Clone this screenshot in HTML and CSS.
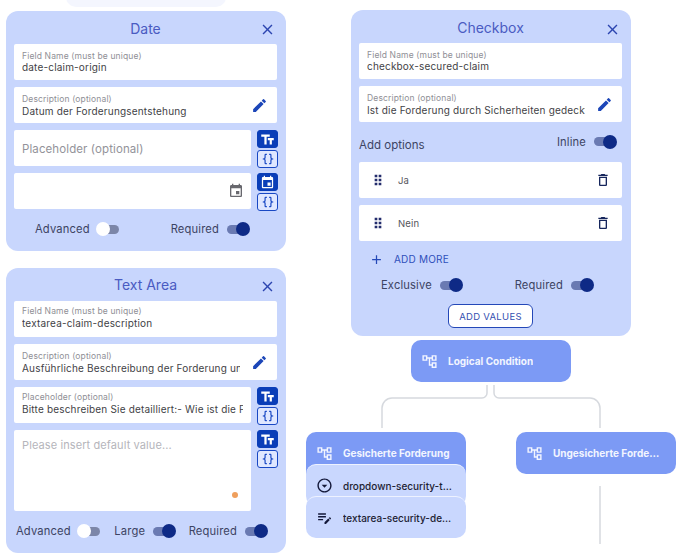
FILE: index.html
```html
<!DOCTYPE html>
<html lang="en">
<head>
<meta charset="utf-8">
<title>Form flow editor</title>
<link rel="stylesheet" href="styles.css">
</head>
<body>
<svg class="defs" width="0" height="0" aria-hidden="true">
  <symbol id="i-close" viewBox="0 0 24 24"><path d="M19 6.41 17.59 5 12 10.59 6.41 5 5 6.41 10.59 12 5 17.59 6.41 19 12 13.41 17.59 19 19 17.59 13.41 12z"/></symbol>
  <symbol id="i-edit" viewBox="0 0 24 24"><path d="M3 17.25V21h3.75L17.81 9.94l-3.75-3.75L3 17.25zM20.71 7.04a1 1 0 0 0 0-1.41l-2.34-2.34a1 1 0 0 0-1.41 0l-1.83 1.83 3.75 3.75 1.83-1.83z"/></symbol>
  <symbol id="i-size" viewBox="0 0 24 24"><path d="M2 4v3.5h5V20h3.6V7.5h5V4H2zM22 9.5h-9.5V13h3v7H19v-7h3V9.5z"/></symbol>
  <symbol id="i-braces" viewBox="0 0 24 24"><path d="M8 3a2 2 0 0 0-2 2v4a2 2 0 0 1-2 2H3v2h1a2 2 0 0 1 2 2v4a2 2 0 0 0 2 2h2v-2H8v-5a2 2 0 0 0-2-2 2 2 0 0 0 2-2V5h2V3M16 3a2 2 0 0 1 2 2v4a2 2 0 0 0 2 2h1v2h-1a2 2 0 0 0-2 2v4a2 2 0 0 1-2 2h-2v-2h2v-5a2 2 0 0 1 2-2 2 2 0 0 1-2-2V5h-2V3h2z"/></symbol>
  <symbol id="i-event" viewBox="0 0 24 24"><path d="M17 12h-5v5h5v-5zM16 1v2H8V1H6v2H5C3.89 3 3.01 3.9 3.01 5L3 19c0 1.1.89 2 2 2h14c1.1 0 2-.9 2-2V5c0-1.1-.9-2-2-2h-1V1h-2zm3 18H5V8h14v11z"/></symbol>
  <symbol id="i-delete" viewBox="0 0 24 24"><path d="M6 19c0 1.1.9 2 2 2h8c1.1 0 2-.9 2-2V7H6v12zM8 9h8v10H8V9zm7.5-5-1-1h-5l-1 1H5v2h14V4z"/></symbol>
  <symbol id="i-drag" viewBox="0 0 24 24"><path d="M7 4h4v4H7zM13 4h4v4h-4zM7 10h4v4H7zM13 10h4v4h-4zM7 16h4v4H7zM13 16h4v4h-4z"/></symbol>
  <symbol id="i-add" viewBox="0 0 24 24"><path d="M19 13h-6v6h-2v-6H5v-2h6V5h2v6h6v2z"/></symbol>
  <symbol id="i-tree" viewBox="0 0 24 24"><path fill-rule="evenodd" d="M22 11V3h-7v3H9V3H2v8h7V8h2v10h4v3h7v-8h-7v3h-2V8h2v3h7zM7 9H4V5h3v4zm10 6h3v4h-3v-4zm0-10h3v4h-3V5z"/></symbol>
  <symbol id="i-dropdown" viewBox="0 0 24 24"><path d="M12 4c4.41 0 8 3.59 8 8s-3.59 8-8 8-8-3.59-8-8 3.59-8 8-8m0-2C6.48 2 2 6.48 2 12s4.48 10 10 10 10-4.48 10-10S17.52 2 12 2zm0 13-4-4h8z"/></symbol>
  <symbol id="i-note" viewBox="0 0 24 24"><path d="M3 10h11v2H3v-2zm0-2h11V6H3v2zm0 8h7v-2H3v2zm15.01-3.13.71-.71a1 1 0 0 1 1.41 0l.71.71a1 1 0 0 1 0 1.41l-.71.71-2.12-2.12zm-.71.71-5.3 5.3V21h2.12l5.3-5.3-2.12-2.12z"/></symbol>
</svg>

<main class="canvas">
  <div class="ghost-node"></div>

  <svg class="wires" width="699" height="557" viewBox="0 0 699 557" aria-hidden="true">
    <path d="M487 385v8a5 5 0 0 1-5 5H392a10 10 0 0 0-10 10v20"/>
    <path d="M494 385v8a5 5 0 0 0 5 5h91a10 10 0 0 1 10 10v20"/>
    <path d="M600 486v58"/>
  </svg>

  <section class="card card-date">
    <header class="card-head"><h2>Date</h2><svg class="ic close"><use href="#i-close"/></svg></header>
    <div class="stack">
      <div class="field first"><span class="lbl">Field Name (must be unique)</span><span class="val">date-claim-origin</span></div>
      <div class="field has-icon"><div class="field-text"><span class="lbl">Description (optional)</span><span class="val">Datum der Forderungsentstehung</span></div><svg class="ic edit"><use href="#i-edit"/></svg></div>
      <div class="with-side">
        <div class="field grow"><span class="ph">Placeholder (optional)</span></div>
        <div class="side"><span class="sq on"><svg class="ic"><use href="#i-size"/></svg></span><span class="sq"><svg class="ic"><use href="#i-braces"/></svg></span></div>
      </div>
      <div class="with-side">
        <div class="field grow has-icon"><div class="field-text"></div><svg class="ic cal"><use href="#i-event"/></svg></div>
        <div class="side"><span class="sq on"><svg class="ic"><use href="#i-event"/></svg></span><span class="sq"><svg class="ic"><use href="#i-braces"/></svg></span></div>
      </div>
    </div>
    <div class="toggles date-toggles">
      <div class="tg"><span>Advanced</span><span class="switch off"></span></div>
      <div class="tg"><span>Required</span><span class="switch"></span></div>
    </div>
  </section>

  <section class="card card-area">
    <header class="card-head"><h2>Text Area</h2><svg class="ic close"><use href="#i-close"/></svg></header>
    <div class="stack">
      <div class="field"><span class="lbl">Field Name (must be unique)</span><span class="val">textarea-claim-description</span></div>
      <div class="field has-icon"><div class="field-text"><span class="lbl">Description (optional)</span><span class="val">Ausführliche Beschreibung der Forderung und ihrer Entstehung</span></div><svg class="ic edit"><use href="#i-edit"/></svg></div>
      <div class="with-side">
        <div class="field grow"><span class="lbl">Placeholder (optional)</span><span class="val">Bitte beschreiben Sie detailliert:- Wie ist die Forderung entstanden</span></div>
        <div class="side"><span class="sq on"><svg class="ic"><use href="#i-size"/></svg></span><span class="sq"><svg class="ic"><use href="#i-braces"/></svg></span></div>
      </div>
      <div class="with-side tall">
        <div class="field grow area"><span class="ph ph-small">Please insert default value...</span><i class="dot"></i></div>
        <div class="side"><span class="sq on"><svg class="ic"><use href="#i-size"/></svg></span><span class="sq"><svg class="ic"><use href="#i-braces"/></svg></span></div>
      </div>
    </div>
    <div class="toggles area-toggles">
      <div class="tg"><span>Advanced</span><span class="switch off"></span></div>
      <div class="tg"><span>Large</span><span class="switch"></span></div>
      <div class="tg"><span>Required</span><span class="switch"></span></div>
    </div>
  </section>

  <section class="card card-check">
    <header class="card-head"><h2>Checkbox</h2><svg class="ic close"><use href="#i-close"/></svg></header>
    <div class="stack">
      <div class="field first"><span class="lbl">Field Name (must be unique)</span><span class="val">checkbox-secured-claim</span></div>
      <div class="field has-icon"><div class="field-text"><span class="lbl">Description (optional)</span><span class="val">Ist die Forderung durch Sicherheiten gedeckt oder nicht</span></div><svg class="ic edit"><use href="#i-edit"/></svg></div>
    </div>
    <div class="opts-head">
      <span class="opts-title">Add options</span>
      <div class="tg inline-tg"><span>Inline</span><span class="switch"></span></div>
    </div>
    <div class="stack">
      <div class="field option"><svg class="ic drag"><use href="#i-drag"/></svg><span class="opt-name">Ja</span><svg class="ic del"><use href="#i-delete"/></svg></div>
      <div class="field option"><svg class="ic drag"><use href="#i-drag"/></svg><span class="opt-name">Nein</span><svg class="ic del"><use href="#i-delete"/></svg></div>
    </div>
    <div class="add-more"><svg class="ic"><use href="#i-add"/></svg><span>ADD MORE</span></div>
    <div class="toggles check-toggles">
      <div class="tg"><span>Exclusive</span><span class="switch"></span></div>
      <div class="tg"><span>Required</span><span class="switch"></span></div>
    </div>
    <div class="btn-row"><span class="btn">ADD VALUES</span></div>
  </section>

  <div class="node node-logic"><svg class="ic"><use href="#i-tree"/></svg><span>Logical Condition</span></div>

  <div class="branch">
    <div class="node node-head"><svg class="ic"><use href="#i-tree"/></svg><span>Gesicherte Forderung</span></div>
    <div class="node node-child child-a"><svg class="ic"><use href="#i-dropdown"/></svg><span>dropdown-security-type</span></div>
    <div class="node node-child child-b"><svg class="ic"><use href="#i-note"/></svg><span>textarea-security-description</span></div>
  </div>

  <div class="node node-right"><svg class="ic"><use href="#i-tree"/></svg><span>Ungesicherte Forderung</span></div>
</main>
</body>
</html>
```
FILE: styles.css
```css
* { box-sizing: border-box; }
html, body { margin: 0; padding: 0; background: #fff; }
body { font-family: Inter, "Liberation Sans", sans-serif; color: #3a4160; overflow: hidden; }
.defs { position: absolute; }
.canvas { position: relative; width: 699px; height: 557px; overflow: hidden; }

.ghost-node { position: absolute; left: 66px; top: -30px; width: 160px; height: 37px; background: #f4f6fe; border-radius: 10px; }
.wires { position: absolute; left: 0; top: 0; }
.wires path { fill: none; stroke: #d6d9de; stroke-width: 1.5; }

.ic { display: block; width: 16px; height: 16px; fill: currentColor; flex: none; }

.card { position: absolute; width: 280px; background: #c8d6fd; border-radius: 12px; padding: 0 9px 0 8px; }
.card-date { left: 6px; top: 11px; height: 240px; }
.card-area { left: 6px; top: 268px; height: 285px; }
.card-check { left: 351px; top: 10px; height: 326px; }

.card-head { position: relative; height: 33px; display: flex; align-items: center; justify-content: center; }
.card-date .card-head { padding-top: 1px; }
.card-check .card-head { padding-top: 2px; }
.card-head h2 { margin: 0; font-size: 14px; font-weight: 400; color: #4a5bc2; }
.close { position: absolute; right: 1px; top: 10px; width: 17px; height: 17px; color: #2c45b0; }
.card-check .close { top: 11px; }

.stack { display: flex; flex-direction: column; gap: 7px; }
.with-side { display: flex; gap: 6px; height: 36px; }
.with-side.tall { height: 81px; }
.field { height: 36px; background: #fff; border-radius: 2px; padding: 5px 8px 0; display: flex; flex-direction: column; min-width: 0; overflow: hidden; }
.field.first { padding-top: 7px; }
.field.first .val { line-height: 11px; }
.field.grow { flex: 1; height: 100%; }
.has-icon { flex-direction: row; align-items: center; padding: 0 9px 0 8px; gap: 11px; }
.field-text { flex: 1; min-width: 0; overflow: hidden; padding-top: 1px; }
.lbl, .val { display: block; white-space: nowrap; overflow: hidden; }
.lbl { font-size: 8.5px; line-height: 11px; color: #8f8f96; letter-spacing: .15px; }
.val { font-size: 10px; line-height: 13px; color: #3f3f46; letter-spacing: .18px; }
.ph { font-size: 11.5px; line-height: 36px; color: #93939a; letter-spacing: .1px; margin-top: -4px; }
.ph-small { font-size: 11px; line-height: 16px; margin-top: 2px; color: #b5b5bb; }
.edit { width: 17px; height: 17px; color: #1c46b8; }
.cal { width: 16px; height: 16px; color: #68686e; margin-right: -2px; }
.area { position: relative; }
.dot { position: absolute; right: 13px; bottom: 13px; width: 6px; height: 6px; border-radius: 50%; background: #ef9f5d; }

.side { width: 21px; display: flex; flex-direction: column; gap: 2px; margin-right: -1px; flex: none; }
.sq { width: 21px; height: 18px; border-radius: 3px; border: 1px solid #1848c4; color: #1848c4; background: #dfe7ff; display: flex; align-items: center; justify-content: center; flex: none; }
.sq .ic { width: 14px; height: 14px; }
.sq.on { background: #0a3eb8; border-color: #0a3eb8; color: #fff; }
.sq.on .ic { width: 15px; height: 15px; }

.toggles { display: flex; align-items: center; }
.tg { display: flex; align-items: center; font-size: 11.2px; letter-spacing: .15px; color: #3d4463; }
.switch { position: relative; display: block; width: 21px; height: 9px; border-radius: 5px; background: #6a7ab2; margin-left: 8px; }
.switch::after { content: ""; position: absolute; right: -2px; top: -2.5px; width: 14px; height: 14px; border-radius: 50%; background: #0e2a86; }
.switch.off { background: #7c86a8; }
.switch.off::after { right: auto; left: -2px; background: #fff; }

.date-toggles { margin-top: 13px; padding: 0 29px 0 21px; justify-content: space-between; }
.area-toggles { margin-top: 13px; padding: 0 11px 0 2px; justify-content: space-between; }
.check-toggles { margin-top: 1px; padding: 0 30px 0 22px; justify-content: space-between; }

.opts-head { height: 40px; display: flex; align-items: center; justify-content: space-between; padding-right: 7px; }
.opts-title { font-size: 11.5px; color: #3d4463; padding-top: 6px; }
.inline-tg { margin-top: -1px; }
.option { flex-direction: row; align-items: center; padding: 0 11px 0 11px; }
.drag { width: 16px; height: 16px; color: #232c6c; }
.opt-name { flex: 1; font-size: 9.5px; margin-left: 12px; color: #55555c; letter-spacing: .2px; }
.del { width: 16px; height: 16px; color: #16265c; }
.add-more { height: 36px; display: flex; align-items: center; gap: 10px; padding-left: 10px; font-size: 10px; color: #2f50bb; letter-spacing: .2px; }
.add-more .ic { width: 15px; height: 15px; color: #2448b8; }
.btn-row { display: flex; justify-content: center; margin-top: 12px; }
.btn { width: 85px; height: 24px; background: #fff; border: 1px solid #2448b8; border-radius: 6px; color: #3450b0; font-size: 9.5px; display: flex; align-items: center; justify-content: center; letter-spacing: .3px; }

.node { width: 160px; height: 42px; border-radius: 10px; display: flex; align-items: center; font-size: 10px; font-weight: 700; color: #f2f5ff; background: #7c9af5; padding-left: 10px; gap: 10px; }
.node span { white-space: nowrap; overflow: hidden; text-overflow: ellipsis; }
.node .ic { width: 17px; height: 17px; }
.node-logic { position: absolute; left: 411px; top: 340px; }
.node-right { position: absolute; left: 516px; top: 432px; padding-right: 15px; }

.branch { position: absolute; left: 306px; top: 432px; width: 160px; display: flex; flex-direction: column; }
.node-head { border-radius: 10px 10px 0 0; padding-right: 10px; align-items: flex-start; padding-top: 13px; }
.node-head span { line-height: 17px; }
.node-child { background: #c9d7fe; color: #1d2233; font-weight: 500; border-top: 1px solid #eef2ff; padding-right: 11px; }
.node-child .ic { color: #14193a; }
.child-a { margin-top: -10px; position: relative; }
.child-b { margin-top: -10px; position: relative; }
```
